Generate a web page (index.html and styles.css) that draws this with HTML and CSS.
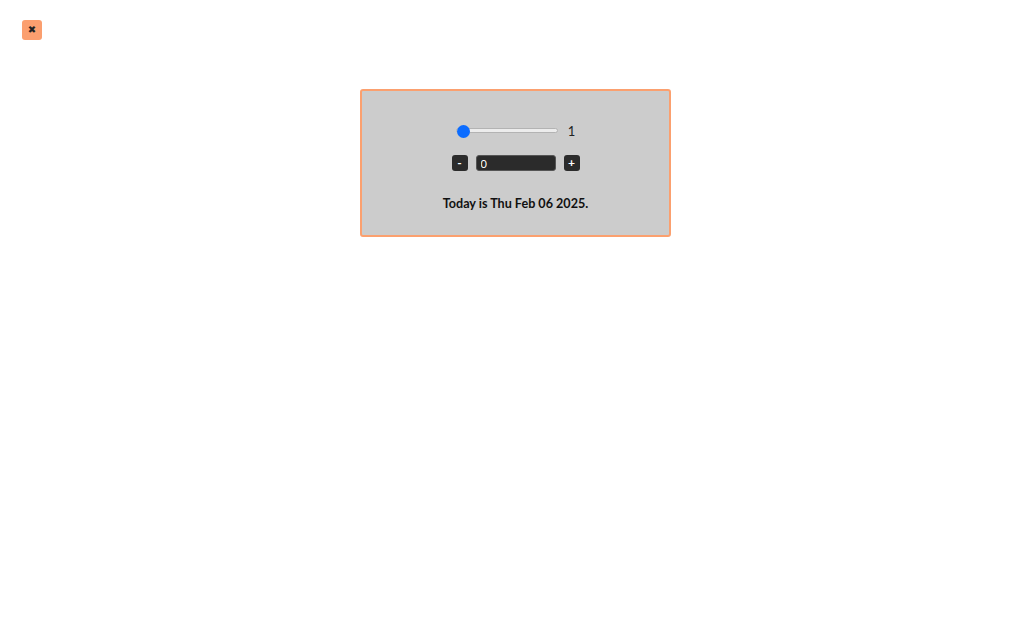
FILE: index.html
```html
<!DOCTYPE html>
<html>
<head>
<meta charset="utf-8">
<link rel="stylesheet" href="styles.css">
</head>
<body>
<button class="close">✖</button>
<div class="card">
  <div class="slider-row">
    <input class="range" type="range" min="1" max="100" value="1">
    <span class="value">1</span>
  </div>
  <div class="counter">
    <button class="btn">-</button>
    <input class="num" type="text" value="0">
    <button class="btn">+</button>
  </div>
  <p class="date">Today is Thu Feb 06 2025.</p>
</div>
</body>
</html>
```
FILE: styles.css
```css
html, body {
  margin: 0;
  padding: 0;
  background: #ffffff;
  font-family: Lato, "Liberation Sans", sans-serif;
}
body {
  padding-top: 20px;
}
.close {
  display: block;
  margin-left: 22px;
  width: 20px;
  height: 20px;
  padding: 0;
  border: none;
  border-radius: 3px;
  background: #fb9f6f;
  color: #222;
  font-family: "DejaVu Sans", sans-serif;
  font-size: 10px;
  line-height: 20px;
  text-align: center;
}
.card {
  box-sizing: border-box;
  width: 311px;
  height: 148px;
  margin: 49px auto 0;
  position: relative;
  left: -1px;
  background: #cccccc;
  border: 2px solid #fba06f;
  border-radius: 3px;
  display: flex;
  flex-direction: column;
  align-items: center;
  padding-top: 31px;
}
.slider-row {
  display: flex;
  align-items: center;
  height: 16px;
  gap: 10px;
}
.range {
  -webkit-appearance: none;
  appearance: none;
  width: 102px;
  height: 16px;
  margin: 0;
  background: transparent;
}
.range::-webkit-slider-runnable-track {
  height: 5px;
  background: #ececec;
  border: 1px solid #b3b3b3;
  border-radius: 4px;
}
.range::-webkit-slider-thumb {
  -webkit-appearance: none;
  width: 13px;
  height: 13px;
  border-radius: 50%;
  background: #0b6cff;
  border: none;
  margin-top: -4px;
}
.value {
  font-size: 13px;
  color: #222;
  line-height: 16px;
  padding-top: 1px;
}
.counter {
  margin-top: 17px;
  display: flex;
  align-items: center;
  gap: 8px;
  height: 16px;
}
.btn {
  width: 16px;
  height: 16px;
  padding: 0;
  border: none;
  border-radius: 3px;
  background: #2b2b2b;
  color: #fff;
  font-family: Lato, sans-serif;
  font-weight: bold;
  font-size: 12px;
  line-height: 16px;
  text-align: center;
}
.num {
  box-sizing: border-box;
  width: 80px;
  height: 16px;
  margin: 0;
  padding: 0 4px;
  border: 1px solid #555;
  border-radius: 3px;
  background: #2b2b2b;
  color: #fff;
  font-family: Lato, sans-serif;
  font-size: 11px;
  outline: none;
}
.date {
  margin: 25px 0 0;
  font-size: 12.6px;
  font-weight: bold;
  color: #111;
  line-height: 16px;
}
```
